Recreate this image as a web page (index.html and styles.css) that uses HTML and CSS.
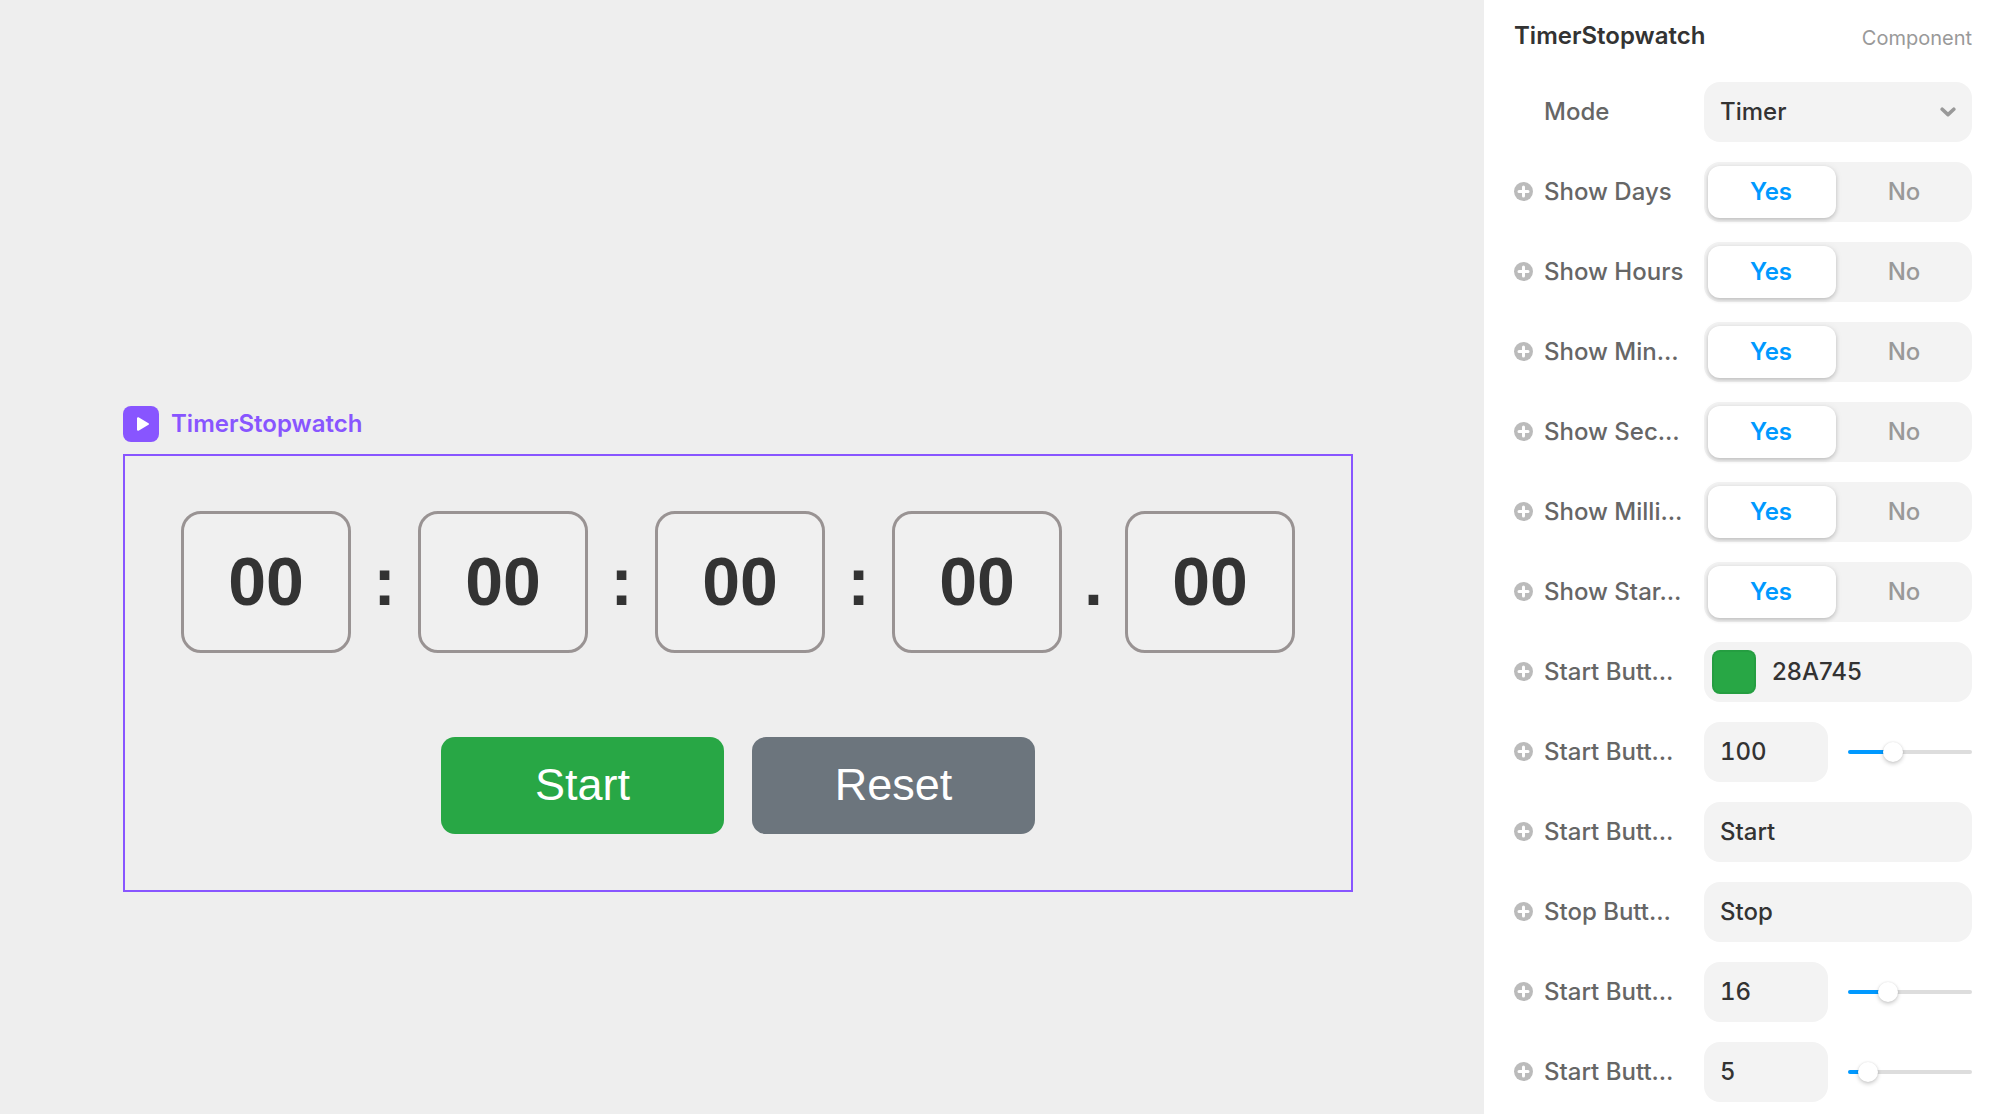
FILE: index.html
```html
<!DOCTYPE html>
<html lang="en">
<head>
<meta charset="utf-8">
<meta name="viewport" content="width=device-width, initial-scale=1">
<title>TimerStopwatch</title>
<link rel="stylesheet" href="styles.css">
</head>
<body>
<svg class="sprite" width="0" height="0" aria-hidden="true">
  <symbol id="plus" viewBox="0 0 20 20">
    <circle cx="9.500" cy="9.500" r="9.500" fill="#bbb"/>
    <path d="M9.500 5v9M5 9.500h9" stroke="#fff" stroke-width="3" stroke-linecap="round"/>
  </symbol>
</svg>
<div class="app">
  <main class="canvas">
    <div class="layer">
      <svg class="layer-icon" viewBox="0 0 36 36" aria-hidden="true">
        <rect width="36" height="36" rx="8" fill="#85f"/>
        <path d="M15 12.200v11.600L25 18z" fill="#fff" stroke="#fff" stroke-width="2" stroke-linejoin="round"/>
      </svg>
      <span>TimerStopwatch</span>
    </div>
    <section class="frame">
      <div class="clock">
        <div class="unit">00</div>
        <div class="colon">:</div>
        <div class="unit">00</div>
        <div class="colon">:</div>
        <div class="unit">00</div>
        <div class="colon">:</div>
        <div class="unit">00</div>
        <div class="point">.</div>
        <div class="unit">00</div>
      </div>
      <div class="actions">
        <button class="action start" type="button">Start</button>
        <button class="action reset" type="button">Reset</button>
      </div>
    </section>
  </main>

  <aside class="panel">
    <header class="panel-head">
      <h1>TimerStopwatch</h1>
      <span class="kind">Component</span>
    </header>
    <form class="rows">
      <div class="row">
        <span></span>
        <label class="name" for="mode">Mode</label>
        <div class="select">
          <select class="field" id="mode"><option>Timer</option></select>
          <svg class="chevron" viewBox="0 0 16 10" aria-hidden="true"><path d="M2.200 2.200 8 7.600l5.800-5.400" fill="none" stroke="#999" stroke-width="3.600" stroke-linecap="round" stroke-linejoin="round"/></svg>
        </div>
      </div>
      <div class="row">
        <button class="add" type="button"><svg><use href="#plus"/></svg></button>
        <span class="name" id="days">Show Days</span>
        <div class="toggle" role="radiogroup" aria-labelledby="days">
          <label><input type="radio" name="days" checked><span>Yes</span></label>
          <label><input type="radio" name="days"><span>No</span></label>
        </div>
      </div>
      <div class="row">
        <button class="add" type="button"><svg><use href="#plus"/></svg></button>
        <span class="name" id="hours">Show Hours</span>
        <div class="toggle" role="radiogroup" aria-labelledby="hours">
          <label><input type="radio" name="hours" checked><span>Yes</span></label>
          <label><input type="radio" name="hours"><span>No</span></label>
        </div>
      </div>
      <div class="row">
        <button class="add" type="button"><svg><use href="#plus"/></svg></button>
        <span class="name" id="min">Show Min…</span>
        <div class="toggle" role="radiogroup" aria-labelledby="min">
          <label><input type="radio" name="min" checked><span>Yes</span></label>
          <label><input type="radio" name="min"><span>No</span></label>
        </div>
      </div>
      <div class="row">
        <button class="add" type="button"><svg><use href="#plus"/></svg></button>
        <span class="name" id="sec">Show Sec…</span>
        <div class="toggle" role="radiogroup" aria-labelledby="sec">
          <label><input type="radio" name="sec" checked><span>Yes</span></label>
          <label><input type="radio" name="sec"><span>No</span></label>
        </div>
      </div>
      <div class="row">
        <button class="add" type="button"><svg><use href="#plus"/></svg></button>
        <span class="name" id="milli">Show Milli…</span>
        <div class="toggle" role="radiogroup" aria-labelledby="milli">
          <label><input type="radio" name="milli" checked><span>Yes</span></label>
          <label><input type="radio" name="milli"><span>No</span></label>
        </div>
      </div>
      <div class="row">
        <button class="add" type="button"><svg><use href="#plus"/></svg></button>
        <span class="name" id="star">Show Star…</span>
        <div class="toggle" role="radiogroup" aria-labelledby="star">
          <label><input type="radio" name="star" checked><span>Yes</span></label>
          <label><input type="radio" name="star"><span>No</span></label>
        </div>
      </div>
      <div class="row">
        <button class="add" type="button"><svg><use href="#plus"/></svg></button>
        <label class="name" id="color-name" for="color">Start Butt…</label>
        <div class="color">
          <input class="swatch" type="color" value="#28a745" aria-labelledby="color-name">
          <input class="hex" type="text" id="color" value="28A745">
        </div>
      </div>
      <div class="row">
        <button class="add" type="button"><svg><use href="#plus"/></svg></button>
        <label class="name" id="width-name" for="width">Start Butt…</label>
        <div class="number">
          <input class="field" type="text" id="width" value="100">
          <input class="slider" type="range" min="0" max="300" value="100" style="--fill: 0.333" aria-labelledby="width-name">
        </div>
      </div>
      <div class="row">
        <button class="add" type="button"><svg><use href="#plus"/></svg></button>
        <label class="name" for="start-text">Start Butt…</label>
        <input class="field" type="text" id="start-text" value="Start">
      </div>
      <div class="row">
        <button class="add" type="button"><svg><use href="#plus"/></svg></button>
        <label class="name" for="stop-text">Stop Butt…</label>
        <input class="field" type="text" id="stop-text" value="Stop">
      </div>
      <div class="row">
        <button class="add" type="button"><svg><use href="#plus"/></svg></button>
        <label class="name" id="size-name" for="size">Start Butt…</label>
        <div class="number">
          <input class="field" type="text" id="size" value="16">
          <input class="slider" type="range" min="0" max="56" value="16" style="--fill: 0.286" aria-labelledby="size-name">
        </div>
      </div>
      <div class="row">
        <button class="add" type="button"><svg><use href="#plus"/></svg></button>
        <label class="name" id="radius-name" for="radius">Start Butt…</label>
        <div class="number">
          <input class="field" type="text" id="radius" value="5">
          <input class="slider" type="range" min="0" max="50" value="5" style="--fill: 0.1" aria-labelledby="radius-name">
        </div>
      </div>
    </form>
  </aside>
</div>
</body>
</html>
```
FILE: styles.css
```css
* {
  box-sizing: border-box;
}

body {
  margin: 0;
  background: #eee;
  color: #333;
  font: 500 24px/28px Inter, sans-serif;
}

button,
input,
select {
  margin: 0;
  border: 0;
  padding: 0;
  color: inherit;
  font: inherit;
}

.sprite {
  display: block;
}

.app {
  display: grid;
  grid-template-columns: 1fr 514px;
  min-height: 100vh;
}

/* Canvas */

.canvas {
  padding: 406px 131px 0 123px;
}

.layer {
  display: flex;
  align-items: center;
  gap: 12px;
  margin-bottom: 12px;
  color: #85f;
  font-weight: 600;
}

.layer-icon {
  width: 36px;
  height: 36px;
}

.frame {
  border: 2px solid #85f;
  padding: 55px 0 56px;
  font-family: "Liberation Sans", Arial, sans-serif;
}

.clock {
  display: flex;
  justify-content: center;
  font-size: 68px;
  font-weight: 700;
  line-height: 134px;
  text-align: center;
}

.unit {
  width: 170px;
  border: 3px solid #999393;
  border-radius: 20px;
  padding-bottom: 2px;
  background: #f0f0f0;
}

.colon,
.point {
  width: 67px;
  padding: 3px 0;
}

.point {
  width: 63px;
}

.actions {
  display: flex;
  justify-content: center;
  gap: 28px;
  margin-top: 84px;
}

.action {
  width: 283px;
  height: 97px;
  border-radius: 14px;
  padding-bottom: 2px;
  color: #fff;
  font: 400 45px/52px "Liberation Sans", Arial, sans-serif;
}

.start {
  background: #28a745;
}

.reset {
  background: #6c757d;
}

/* Properties panel */

.panel {
  padding: 22px 26px 12px 30px;
  background: #fff;
}

.panel-head {
  display: flex;
  justify-content: space-between;
  height: 60px;
}

.panel-head h1 {
  margin: 0;
  font-size: 24px;
  font-weight: 600;
}

.kind {
  color: #999;
  font-size: 20px;
  font-weight: 400;
  line-height: 32px;
}

.rows {
  display: grid;
  gap: 20px;
}

.row {
  display: grid;
  grid-template-columns: 30px 160px 1fr;
  align-items: center;
  height: 60px;
}

.add {
  width: 20px;
  height: 20px;
  background: none;
}

.add svg {
  display: block;
  width: 20px;
  height: 20px;
}

.name {
  color: #666;
  white-space: nowrap;
}

.field,
.toggle,
.color {
  width: 100%;
  height: 60px;
  border-radius: 16px;
  background: #f3f3f3;
}

.field {
  padding: 0 16px;
}

input.field {
  padding-bottom: 2px;
}

.select {
  display: grid;
  align-items: center;
}

.select > * {
  grid-area: 1 / 1;
}

.select .field {
  appearance: none;
}

.chevron {
  justify-self: end;
  width: 16px;
  height: 10px;
  margin-right: 16px;
  pointer-events: none;
}

.toggle {
  display: grid;
  grid-template-columns: 1fr 1fr;
  gap: 4px;
  padding: 4px;
}

.toggle label {
  display: grid;
}

.toggle input {
  grid-area: 1 / 1;
  appearance: none;
}

.toggle span {
  grid-area: 1 / 1;
  border-radius: 12px;
  color: #999;
  line-height: 52px;
  text-align: center;
}

.toggle input:checked + span {
  padding-right: 2px;
  background: #fff;
  box-shadow: 0 2px 4px rgba(0, 0, 0, 0.2), 0 0 8px rgba(0, 0, 0, 0.05);
  color: #09f;
  font-weight: 600;
}

.color {
  display: flex;
  align-items: center;
  gap: 16px;
  padding: 0 8px;
}

.swatch {
  flex: none;
  appearance: none;
  width: 44px;
  height: 44px;
  background: none;
}

.swatch::-webkit-color-swatch-wrapper {
  padding: 0;
}

.swatch::-webkit-color-swatch {
  border: 0;
  border-radius: 8px;
  box-shadow: inset 0 0 0 2px rgba(0, 0, 0, 0.05);
}

.hex {
  min-width: 0;
  width: 100%;
  background: none;
}

.number {
  display: grid;
  grid-template-columns: 1fr 1fr;
  align-items: center;
  gap: 20px;
  font-variant-numeric: tabular-nums;
}

.slider {
  appearance: none;
  width: 100%;
  height: 20px;
  background: none;
}

.slider::-webkit-slider-runnable-track {
  height: 4px;
  border-radius: 2px;
  background: linear-gradient(#09f, #09f) 0 0 / calc(10px + (100% - 20px) * var(--fill)) 100% no-repeat #ddd;
}

.slider::-webkit-slider-thumb {
  appearance: none;
  width: 20px;
  height: 20px;
  margin-top: -8px;
  border-radius: 50%;
  background: #fff;
  box-shadow: 0 2px 4px rgba(0, 0, 0, 0.2), 0 0 2px rgba(0, 0, 0, 0.1);
}
```
